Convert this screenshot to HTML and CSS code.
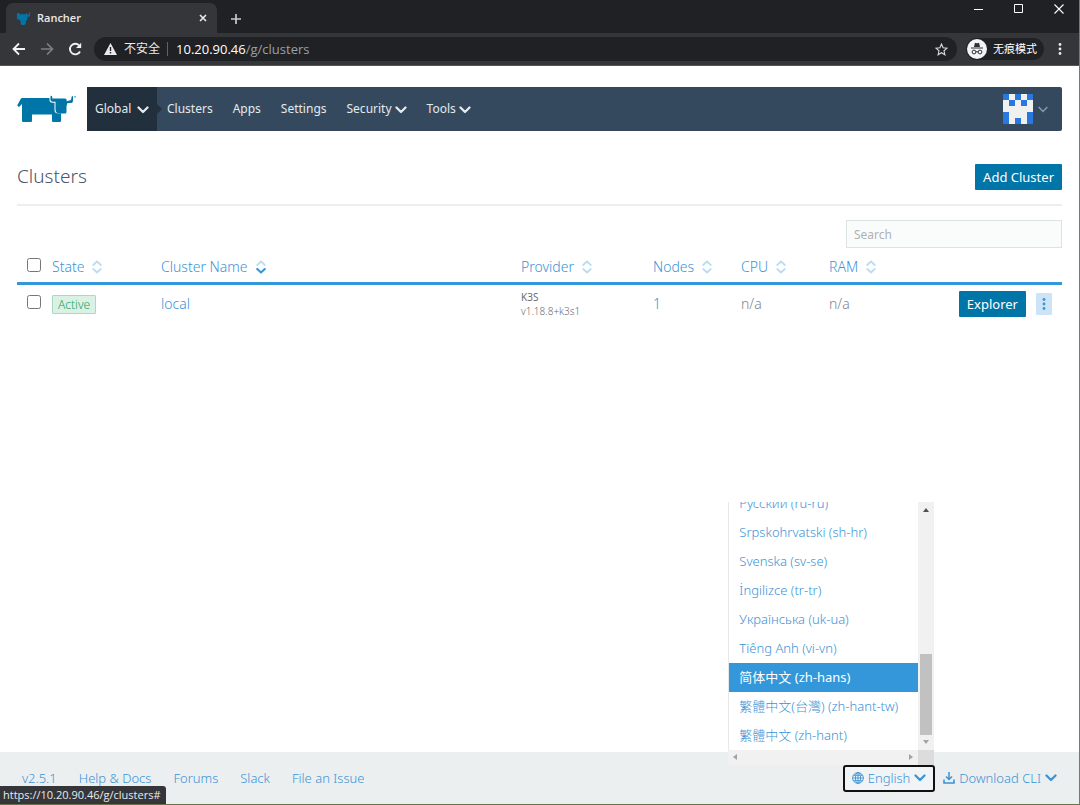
FILE: index.html
```html
<!DOCTYPE html>
<html lang="en">
<head>
<meta charset="utf-8">
<title>Rancher</title>
<link rel="stylesheet" href="styles.css">
</head>
<body>
<svg class="defs" aria-hidden="true">
  <symbol id="chevron" viewBox="0 0 12 8"><path d="M1.500 1.500 6 6l4.500-4.500" fill="none" stroke="currentColor" stroke-width="2.300" stroke-linecap="round" stroke-linejoin="round"/></symbol>
  <symbol id="sort" viewBox="0 0 10 14"><path d="M1.200 5 5 1.500 8.800 5M1.200 9 5 12.500 8.800 9" fill="none" stroke-width="1.700" stroke-linecap="round"/></symbol>
</svg>
<div class="window">
  <header class="browser">
    <div class="tabstrip">
      <div class="tab">
        <svg class="favicon" viewBox="0 0 16 16" fill="#0075a8"><path d="M1 3.500Q1 2 2 2h1.500l.5 1.500h6.500L11 2h1v2h2V1h1v3.500Q15 6 13.500 6H12v3q0 1-1 1h-.5v3.500L9 15H6l-1-1.500V10H3.500V9H2Q1 9 1 8z"/></svg>
        <span class="tab-title">Rancher</span>
        <button class="plain" aria-label="Close tab"><svg width="8" height="8" viewBox="0 0 8 8"><path d="m1 1 6 6M7 1 1 7" stroke="#e8eaed" stroke-width="1.600"/></svg></button>
      </div>
      <button class="plain newtab" aria-label="New tab"><svg width="12" height="12" viewBox="0 0 12 12"><path d="M6 1v10M1 6h10" stroke="#c8cacd" stroke-width="1.700"/></svg></button>
      <div class="wincontrols">
        <button class="plain" aria-label="Minimize"><svg width="10" height="10" viewBox="0 0 10 10"><path d="M0 5.500h9" stroke="#fff"/></svg></button>
        <button class="plain" aria-label="Maximize"><svg width="10" height="10" viewBox="0 0 10 10"><path d="M.5.5h8v8h-8z" fill="none" stroke="#fff"/></svg></button>
        <button class="plain" aria-label="Close"><svg width="10" height="10" viewBox="0 0 10 10"><path d="m.5.5 9 9m0-9-9 9" stroke="#fff" stroke-width="1.100"/></svg></button>
      </div>
    </div>
    <div class="toolbar">
      <button class="plain" aria-label="Back"><svg width="14" height="14" viewBox="0 0 14 14"><path d="M13 7H2m5-5.500L1.500 7 7 12.500" fill="none" stroke="#f1f3f4" stroke-width="1.800"/></svg></button>
      <button class="plain" aria-label="Forward"><svg width="14" height="14" viewBox="0 0 14 14"><path d="M1 7h11M7 1.500 12.500 7 7 12.500" fill="none" stroke="#7d7f83" stroke-width="1.700"/></svg></button>
      <button class="plain" aria-label="Reload"><svg width="14" height="14" viewBox="0 0 14 14"><path d="M12 9.500A5.300 5.300 0 1 1 11 3.300" fill="none" stroke="#f1f3f4" stroke-width="1.900"/><path d="M13.200.7V6H8z" fill="#f1f3f4"/></svg></button>
      <div class="address">
        <svg width="13" height="12" viewBox="0 0 13 12"><path d="M6.500 0 13 12H0z" fill="#e8eaed"/><path d="M6.500 4v4m0 1v1.500" stroke="#202124" stroke-width="1.400"/></svg>
        <span class="insecure">不安全</span>
        <span class="url"><b>10.20.90.46</b>/g/clusters</span>
        <button class="plain star" aria-label="Bookmark"><svg width="13" height="13" viewBox="0 0 13 13"><path d="m6.500 1 1.600 3.700 4 .4L9 7.800l.9 4-3.400-2.100-3.400 2.100.9-4L.9 5.100l4-.4z" fill="none" stroke="#d6d8db" stroke-width="1.100"/></svg></button>
      </div>
      <div class="incognito">
        <svg width="20" height="20" viewBox="0 0 20 20"><circle cx="10" cy="10" r="10" fill="#f1f3f4"/><path d="M4 9.500h12v-1H4zm3-1.500.8-3.700q.1-.6.7-.4l1.500.4 1.500-.4q.6-.2.7.4L13 8z" fill="#303134"/><g fill="none" stroke="#303134"><circle cx="7" cy="13" r="1.900"/><circle cx="13" cy="13" r="1.900"/><path d="M8.900 13q1.100-.8 2.200 0"/></g></svg>
        <span>无痕模式</span>
      </div>
      <button class="plain kebab" aria-label="Browser menu"><svg width="4" height="12" viewBox="0 0 4 12" fill="#e8eaed"><circle cx="2" cy="1.500" r="1.400"/><circle cx="2" cy="6" r="1.400"/><circle cx="2" cy="10.500" r="1.400"/></svg></button>
    </div>
  </header>

  <div class="page">
    <div class="top">
      <a class="logo" href="#" aria-label="Rancher home"><svg width="60" height="28" viewBox="0 0 60 28" fill="#0075a8"><path d="M5 3H32.500v2q0 2.700 3 2.700h2V15q0 3.500 4 3.500H44V26q0 1-1 1h-7q-1 0-1-1v-6.500H15V26q0 1-1 1H6q-1 0-1-1V9l-3 3L.2 10.500 3.700 4Q4 3 5 3z"/><path d="M33.600.8 35 1l.4 2.500H48q1.700 0 1.700 1.500v1.300L54 5l.7-3.500L56 1v4.500q0 2.500-2 2.500h-3.500l-1 3v6q0 1.500-1.500 1.500h-5.500q-4 0-4-4V6.700h-2.500q-2.600 0-2.600-2.700z"/><circle cx="58" cy="1.800" r="1.100" fill="#8bbfd7"/></svg></a>
      <nav class="nav">
        <a class="current" href="#">Global<svg class="chev"><use href="#chevron"/></svg></a>
        <a href="#">Clusters</a>
        <a href="#">Apps</a>
        <a href="#">Settings</a>
        <a href="#">Security<svg class="chev"><use href="#chevron"/></svg></a>
        <a href="#">Tools<svg class="chev"><use href="#chevron"/></svg></a>
        <button class="plain account" aria-label="Account">
          <svg width="30" height="30" viewBox="0 0 5 5" shape-rendering="crispEdges"><path fill="#f0f0f0" d="M0 0h5v5H0z"/><path fill="#2878df" d="M0 0h1v1H0zM2 0h1v1H2zM4 0h1v1H4zM1 1h1v1H1zM3 1h1v1H3zM0 3h1v2H0zM4 3h1v2H4zM2 4h1v1H2z"/></svg>
          <svg width="10" height="7" viewBox="0 0 10 7"><path d="m.7 1 4.300 4.500L9.300 1" fill="none" stroke="#8899aa" stroke-width="1.500"/></svg>
        </button>
      </nav>
    </div>

    <main>
      <div class="heading"><h1>Clusters</h1><button class="primary">Add Cluster</button></div>
      <div class="searchrow"><input class="search" type="search" placeholder="Search" aria-label="Search clusters"></div>
      <table>
        <colgroup><col class="c-check"><col class="c-state"><col><col class="c-provider"><col class="c-num"><col class="c-num"><col class="c-num"><col class="c-actions"></colgroup>
        <thead><tr>
          <th><input type="checkbox" aria-label="Select all"></th>
          <th><a href="#">State<svg class="sort"><use href="#sort"/></svg></a></th>
          <th><a href="#">Cluster Name<svg class="sort" viewBox="0 0 10 14"><use href="#sort"/><path class="active" d="M1.200 9 5 12.500 8.800 9"/></svg></a></th>
          <th><a href="#">Provider<svg class="sort"><use href="#sort"/></svg></a></th>
          <th><a href="#">Nodes<svg class="sort"><use href="#sort"/></svg></a></th>
          <th><a href="#">CPU<svg class="sort"><use href="#sort"/></svg></a></th>
          <th><a href="#">RAM<svg class="sort"><use href="#sort"/></svg></a></th>
          <th></th>
        </tr></thead>
        <tbody><tr>
          <td><input type="checkbox" aria-label="Select local"></td>
          <td><span class="badge">Active</span></td>
          <td><a href="#">local</a></td>
          <td class="provider">K3S<small>v1.18.8+k3s1</small></td>
          <td><a href="#">1</a></td>
          <td class="muted">n/a</td>
          <td class="muted">n/a</td>
          <td><div class="actions"><button class="primary">Explorer</button><button class="more" aria-label="More actions"><svg width="4" height="12" viewBox="0 0 4 12" fill="#3497da"><circle cx="2" cy="1.500" r="1.400"/><circle cx="2" cy="6" r="1.400"/><circle cx="2" cy="10.500" r="1.400"/></svg></button></div></td>
        </tr></tbody>
      </table>
    </main>

    <footer>
      <a href="#">v2.5.1</a><a href="#">Help &amp; Docs</a><a href="#">Forums</a><a href="#">Slack</a><a href="#">File an Issue</a>
      <div class="language">
        <button class="langbutton" aria-expanded="true"><svg width="12" height="12" viewBox="0 0 12 12" fill="none" stroke="currentColor" stroke-width=".9"><circle cx="6" cy="6" r="5.400"/><ellipse cx="6" cy="6" rx="2.600" ry="5.400"/><path d="M.6 6h10.800M6 .6v10.800M1.400 3.300h9.200M1.400 8.700h9.200"/></svg>English<svg class="chev"><use href="#chevron"/></svg></button>
        <div class="popup">
          <div class="list">
            <a href="#">Русский (ru-ru)</a>
            <a href="#">Srpskohrvatski (sh-hr)</a>
            <a href="#">Svenska (sv-se)</a>
            <a href="#">İngilizce (tr-tr)</a>
            <a href="#">Українська (uk-ua)</a>
            <a href="#">Tiếng Anh (vi-vn)</a>
            <a class="selected" href="#">简体中文 (zh-hans)</a>
            <a href="#">繁體中文(台灣) (zh-hant-tw)</a>
            <a href="#">繁體中文 (zh-hant)</a>
          </div>
          <div class="vbar"><i class="arrow up"></i><i class="thumb"></i><i class="arrow down"></i></div>
          <div class="hbar"><i class="arrow left"></i><i class="arrow right"></i></div>
          <div class="corner"></div>
        </div>
      </div>
      <a class="download" href="#"><svg width="12" height="12" viewBox="0 0 12 12" fill="none" stroke="currentColor"><path d="M6 0v7M3 4.500l3 3 3-3" stroke-width="1.500"/><path d="M1 7.500v3.500h10V7.500" stroke-width="1.600"/></svg>Download CLI<svg class="chev"><use href="#chevron"/></svg></a>
    </footer>
  </div>
  <div class="status">https://10.20.90.46/g/clusters#</div>
</div>
</body>
</html>
```
FILE: styles.css
```css
* { box-sizing: border-box; }
body { margin: 0; font: 300 13px/20px "Noto Sans", "Noto Sans CJK SC", sans-serif; color: #6c6c76; background: #fff; }
a { color: #3d93d6; text-decoration: none; }
button { font: inherit; cursor: pointer; }
input { font: inherit; }
svg { display: block; flex: none; }
.defs { position: absolute; width: 0; height: 0; }
.plain { display: flex; align-items: center; padding: 0; border: 0; background: none; }
.window { position: relative; display: flex; flex-direction: column; min-height: 100vh; border-right: 1px solid #77787a; border-bottom: 1px solid #66734c; }

.browser { font-family: "Open Sans", "Noto Sans CJK SC", sans-serif; font-size: 12px; font-weight: 400; color: #e8eaed; background: #202124; }
.tabstrip { display: flex; align-items: center; height: 33px; }
.tab { display: flex; align-items: center; gap: 6px; align-self: flex-end; width: 211px; height: 30px; margin-left: 6px; padding: 0 10px; border-radius: 7px 7px 0 0; background: #35363a; }
.favicon { width: 15px; height: 15px; }
.tab-title { flex: 1; font-size: 11px; font-weight: 600; }
.newtab { margin: 4px 0 0 13px; }
.wincontrols { display: flex; gap: 30px; margin-left: auto; padding: 0 15px 16px 0; }
.toolbar { display: flex; align-items: center; gap: 14px; height: 33px; padding: 0 17px 0 12px; border-bottom: 1px solid #55565a; background: #35363a; }
.address { flex: 1; display: flex; align-items: center; height: 24px; margin: 0 -5px 0 -2px; padding: 0 9px 0 10px; border-radius: 12px; background: #202124; }
.insecure { margin-left: 7px; padding-right: 7px; line-height: 14px; border-right: 1px solid #5f6368; }
.url { margin-left: 8px; font-size: 13px; color: #9aa0a6; }
.url b { font-weight: 400; color: #fff; }
.star { margin-left: auto; }
.incognito { display: flex; align-items: center; gap: 6px; height: 22px; padding: 0 7px 0 1px; border-radius: 11px; font-size: 11px; color: #fff; background: #202124; }

.page { flex: 1; display: flex; flex-direction: column; }
.top { display: flex; padding: 21px 17px 0; }
.logo { width: 70px; padding-top: 8px; }
.nav { flex: 1; display: flex; height: 44px; border-radius: 0 2px 2px 0; background: #34495e; }
.nav a { display: flex; align-items: center; gap: 3px; padding: 0 10px; font-size: 12px; font-weight: 400; color: #e4e9ed; }
.nav .current { position: relative; width: 70px; padding: 0 8px; justify-content: space-between; background: #22303d; }
.nav .current::after { content: ""; position: absolute; left: 100%; top: 17px; border: 5px solid transparent; border-left-color: #22303d; border-right: 0; }
.chev { width: 12px; height: 8px; }
.nav .chev { margin-top: 2px; }
.account { gap: 5px; margin-left: auto; padding-right: 14px; }

main { flex: 1; padding: 0 17px; }
.heading { display: flex; align-items: flex-start; justify-content: space-between; height: 75px; margin-bottom: 14px; padding-top: 18px; border-bottom: 2px solid #ebefee; }
h1 { margin: 0; font-size: 19px; font-weight: 300; line-height: 54px; color: #4a5568; }
.primary { height: 26px; padding: 0 8px; border: 0; border-radius: 1px; font-weight: 400; color: #fff; background: #0075a8; }
.heading .primary { margin-top: 15px; }
.searchrow { display: flex; justify-content: flex-end; }
.search { width: 216px; height: 28px; padding: 0 7px; border: 1px solid #dce4e2; border-radius: 0; outline: 0; font-size: 12px; font-weight: 400; background: #fafcfb; }
.search::placeholder { color: #aeb2b5; }
table { width: 100%; margin-top: 4px; border-collapse: collapse; table-layout: fixed; font-size: 14px; }
.c-check { width: 35px; }
.c-state { width: 109px; }
.c-provider { width: 132px; }
.c-num { width: 88px; }
.c-actions { width: 145px; }
th, td { padding: 0; font-weight: 300; text-align: left; }
th { height: 31px; border-bottom: 3px solid #3497da; }
th a { display: flex; align-items: center; gap: 8px; }
td { height: 40px; }
td:first-child, th:first-child { padding-left: 10px; }
input[type=checkbox] { display: block; width: 14px; height: 14px; margin: 0 0 3px; }
.sort { width: 10px; height: 14px; margin-top: 1px; stroke: #b9dcf3; }
.active { fill: none; stroke: #3497da; stroke-width: 2; stroke-linecap: round; }
.badge { display: inline-block; padding: 0 5px; border: 1px solid #a9dcbf; border-radius: 1px; font-size: 12px; line-height: 17px; color: #27a35a; background: #dcf1e5; }
.provider { font-size: 10px; font-weight: 400; line-height: 14px; }
.provider small { display: block; font-size: 10px; font-weight: 300; }
.muted { color: #85858d; }
.actions { display: flex; align-items: center; justify-content: flex-end; gap: 10px; padding-right: 10px; font-size: 13px; }
.more { display: grid; place-items: center; width: 16px; height: 22px; padding: 0; border: 0; border-radius: 1px; background: #cde4f6; }

footer { display: flex; align-items: center; gap: 22px; height: 52px; padding: 0 22px; background: #ebeff0; }
.language { position: relative; margin-left: auto; }
.langbutton, .download { display: flex; align-items: center; gap: 4px; }
.langbutton { height: 27px; padding: 0 7px; border: 2px solid #111; border-radius: 3px; color: #3d93d6; background: #f0f4f6; }
.download { margin-left: -14px; }
.popup { position: absolute; right: 1px; bottom: 100%; display: grid; grid-template-columns: 190px 16px; grid-template-rows: 248px 15px; background: #fff; }
.list { display: flex; flex-direction: column; justify-content: flex-end; overflow: hidden; border-left: 1px solid #e8e8e8; }
.list a { flex: none; padding: 0 10px; line-height: 29px; white-space: nowrap; }
.list .selected { font-weight: 400; color: #fff; background: #3497da; }
.vbar { display: flex; flex-direction: column; align-items: center; padding: 6px 0; background: #f1f1f1; }
.thumb { width: 12px; height: 81px; margin: auto 0 5px; background: #c1c1c1; }
.hbar { display: flex; align-items: center; justify-content: space-between; padding: 0 5px; background: #f1f1f1; }
.corner { background: #dcdcdc; }
.arrow { border: 3px solid transparent; }
.up { border-bottom: 4px solid #505050; border-top: 0; }
.down { border-top: 4px solid #a3a3a3; border-bottom: 0; }
.left { border-right: 4px solid #a3a3a3; border-left: 0; }
.right { border-left: 4px solid #a3a3a3; border-right: 0; }
.status { position: absolute; left: 0; bottom: 0; padding: 0 5px 0 3px; border-radius: 0 3px 0 0; font: 11px/18px "Open Sans", sans-serif; color: #e8eaed; background: #35363a; }
```
